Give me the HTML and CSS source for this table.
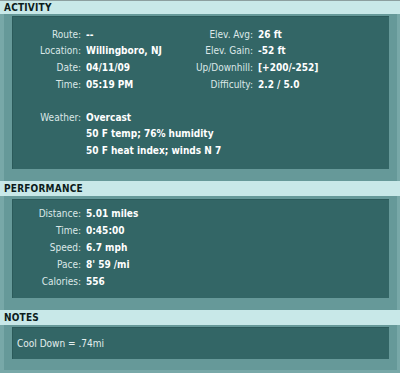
FILE: index.html
```html
<!DOCTYPE html>
<html>
<head>
<meta charset="utf-8">
<link rel="stylesheet" href="styles.css">
</head>
<body>
<div class="page">
  <h2 class="hd hd-first">ACTIVITY</h2>
  <div class="panel panel-act">
    <div class="box act">
      <span class="lb">Route:</span><span class="val">--</span><span class="lb">Elev. Avg:</span><span class="val">26 ft</span>
      <span class="lb">Location:</span><span class="val">Willingboro, NJ</span><span class="lb">Elev. Gain:</span><span class="val">-52 ft</span>
      <span class="lb">Date:</span><span class="val">04/11/09</span><span class="lb">Up/Downhill:</span><span class="val">[+200/-252]</span>
      <span class="lb">Time:</span><span class="val">05:19 PM</span><span class="lb">Difficulty:</span><span class="val">2.2 / 5.0</span>
      <span class="blank"></span>
      <span class="lb">Weather:</span><span class="val wide">Overcast</span>
      <span class="lb"></span><span class="val wide">50 F temp; 76% humidity</span>
      <span class="lb"></span><span class="val wide">50 F heat index; winds N 7</span>
    </div>
  </div>
  <h2 class="hd">PERFORMANCE</h2>
  <div class="panel panel-perf">
    <div class="box perf">
      <span class="lb">Distance:</span><span class="val">5.01 miles</span>
      <span class="lb">Time:</span><span class="val">0:45:00</span>
      <span class="lb">Speed:</span><span class="val">6.7 mph</span>
      <span class="lb">Pace:</span><span class="val">8' 59 /mi</span>
      <span class="lb">Calories:</span><span class="val">556</span>
    </div>
  </div>
  <h2 class="hd">NOTES</h2>
  <div class="panel panel-notes">
    <div class="box notes">Cool Down = .74mi</div>
  </div>
</div>
</body>
</html>
```

FILE: styles.css
```css
html, body {
  margin: 0;
  padding: 0;
  background: #78a8a8;
}
.page {
  width: 400px;
  height: 373px;
  background: #78a8a8;
  padding-bottom: 3px;
  box-sizing: border-box;
  font-family: "DejaVu Sans Condensed", "DejaVu Sans", sans-serif;
  font-stretch: condensed;
  overflow: hidden;
}
.hd {
  margin: 0;
  height: 15px;
  line-height: 15px;
  padding-left: 4px;
  background: #c8e8e8;
  color: #0c1c1c;
  font-size: 10px;
  font-weight: bold;
  letter-spacing: 0.2px;
}
.hd-first {
  height: 13px;
  line-height: 14px;
  border-top: 1px solid #8c9f9f;
}
.panel {
  background: #669999;
  margin: 0 3px 0 4px;
  padding: 2px 8px 12px 8px;
}
.panel-perf {
  padding-top: 3px;
}
.panel-notes {
  padding-bottom: 11px;
}
.box {
  background: #336666;
  border-top: 1px solid #2b5a5a;
  border-left: 1px solid #2b5a5a;
  color: #ffffff;
  font-size: 10px;
}
.act {
  display: grid;
  grid-template-columns: 68px 102px 60px 1fr;
  grid-auto-rows: 16.6px;
  column-gap: 5px;
  align-items: center;
  padding: 9px 0 10px 0;
}
.perf {
  display: grid;
  grid-template-columns: 68px 1fr;
  grid-auto-rows: 17px;
  column-gap: 5px;
  align-items: center;
  padding: 5px 0 8px 0;
}
.lb {
  text-align: right;
  color: #dce8e8;
  white-space: nowrap;
}
.val {
  font-weight: bold;
  font-size: 10px;
  color: #ffffff;
  white-space: nowrap;
}
.wide {
  grid-column: 2 / 5;
}
.blank {
  grid-column: 1 / 5;
}
.notes {
  padding: 7px 0 7px 4px;
  line-height: 17px;
  color: #e4eeee;
}
```
